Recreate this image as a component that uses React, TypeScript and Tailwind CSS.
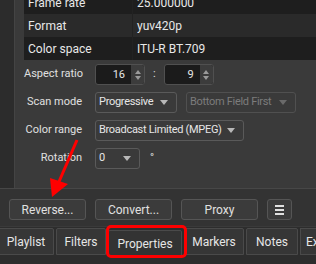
const font = { fontFamily: 'Roboto, "Noto Sans", sans-serif' }

function Combo({ text, w, disabled }: { text: string; w: string; disabled?: boolean }) {
  return (
    <div className={`${w} h-[21px] shrink-0 whitespace-nowrap flex items-center justify-between pl-[3px] pr-[8px] rounded-[3px] border ${disabled ? 'border-[#505050] text-[#7c7c7c]' : 'border-[#5a5a5a] text-[#e6e6e6]'} bg-[#3a3a3a]`}>
      <span className="tracking-[-0.3px]">{text}</span>
      <span className={`w-0 h-0 border-l-[4px] border-r-[4px] border-t-[5px] border-l-transparent border-r-transparent ${disabled ? 'border-t-[#6a6a6a]' : 'border-t-[#b8b8b8]'}`} />
    </div>
  )
}

function Spin({ value }: { value: string }) {
  return (
    <div className="w-[50px] h-[21px] flex rounded-[3px] border border-[#505050] bg-[#1b1b1b] overflow-hidden">
      <span className="flex-1 text-right pr-[6px] leading-[19px] text-[#e6e6e6]">{value}</span>
      <div className="w-[13px] bg-[#3c3c3c] flex flex-col items-center justify-center gap-[2px]">
        <span className="w-0 h-0 border-l-[3px] border-r-[3px] border-b-[4px] border-l-transparent border-r-transparent border-b-[#9a9a9a]" />
        <span className="w-0 h-0 border-l-[3px] border-r-[3px] border-t-[4px] border-l-transparent border-r-transparent border-t-[#9a9a9a]" />
      </div>
    </div>
  )
}

function Btn({ children, w }: { children: React.ReactNode; w: string }) {
  return (
    <div className={`${w} h-[21px] shrink-0 flex items-center justify-center rounded-[3px] border border-[#555] bg-[#3b3b3b] text-[#e0e0e0]`}>
      {children}
    </div>
  )
}

function Tab({ label, w, sel }: { label: string; w: string; sel?: boolean }) {
  return (
    <div className={`${w} h-[27px] shrink-0 whitespace-nowrap flex items-center justify-center border border-[#4a4a4a] rounded-t-[2px] ${sel ? 'bg-[#333333] mt-[2px]' : 'bg-[#363636]'} text-[#e6e6e6]`}>
      {label}
    </div>
  )
}

export default function App() {
  const rows = [
    { k: 'Frame rate', v: '25.000000', bg: 'bg-[#1e1e1e]' },
    { k: 'Format', v: 'yuv420p', bg: 'bg-[#2a2a2a]' },
    { k: 'Color space', v: 'ITU-R BT.709', bg: 'bg-[#1e1e1e]' },
  ]
  return (
    <div className="relative w-[316px] h-[264px] overflow-hidden bg-[#2d2d2d] text-[12px]" style={font}>
      <div className="flex h-[189px] border-b border-[#474747]">
        <div className="w-[15px] bg-[#2c2c2c] border-r border-[#444]" />
        <div className="flex-1 bg-[#3a3a3a] pl-[9px] overflow-hidden">
          <div className="text-[12px] text-[#e8e8e8] -mt-[9px]">
            {rows.map(r => (
              <div key={r.k} className={`flex h-[23px] items-center whitespace-nowrap ${r.bg}`}>
                <div className="w-[109px] h-full pl-[4px] border-r border-[#222] flex items-center">{r.k}</div>
                <div className="pl-[4px] flex items-center h-full">{r.v}</div>
              </div>
            ))}
          </div>
          <div className="grid grid-cols-[58px_1fr] gap-x-[13px] gap-y-[7px] mt-[4px] text-[11px] text-[#e0e0e0] items-center whitespace-nowrap">
            <div className="text-right">Aspect ratio</div>
            <div className="flex items-center gap-[8px]">
              <Spin value="16" />
              <span>:</span>
              <Spin value="9" />
            </div>
            <div className="text-right">Scan mode</div>
            <div className="flex items-center gap-[9px]">
              <Combo text="Progressive" w="w-[82px]" />
              <Combo text="Bottom Field First" w="w-[110px]" disabled />
            </div>
            <div className="text-right">Color range</div>
            <div className="flex">
              <Combo text="Broadcast Limited (MPEG)" w="w-[149px]" />
            </div>
            <div className="text-right">Rotation</div>
            <div className="flex items-center gap-[10px]">
              <Combo text="0" w="w-[45px]" />
              <span>°</span>
            </div>
          </div>
        </div>
      </div>
      <div className="bg-[#333333] h-[37px] flex items-start pt-[10px] pl-[9px] gap-[9px]">
        <Btn w="w-[77px]">Reverse...</Btn>
        <Btn w="w-[77px]">Convert...</Btn>
        <Btn w="w-[77px]">Proxy</Btn>
        <Btn w="w-[25px]">
          <div className="flex flex-col gap-[2px]">
            <span className="block w-[9px] h-[2px] bg-[#e0e0e0]" />
            <span className="block w-[9px] h-[2px] bg-[#e0e0e0]" />
            <span className="block w-[9px] h-[2px] bg-[#e0e0e0]" />
          </div>
        </Btn>
      </div>
      <div className="flex items-start gap-[2px] -ml-[2px] pt-[1px] border-t border-[#3a3a3a]">
        <Tab label="Playlist" w="w-[56px]" />
        <Tab label="Filters" w="w-[50px]" />
        <Tab label="Properties" w="w-[74px]" sel />
        <Tab label="Markers" w="w-[60px]" />
        <Tab label="Notes" w="w-[52px]" />
        <div className="w-[60px] h-[27px] shrink-0 flex items-center pl-[5px] border border-[#4a4a4a] bg-[#363636] text-[#e6e6e6]">Export</div>
      </div>
      <div className="absolute left-[106px] top-[225px] w-[81px] h-[33px] border-[3px] border-[#ff0000] rounded-[5px]" />
      <svg className="absolute left-0 top-0" width="316" height="264">
        <line x1="77" y1="140" x2="58" y2="184" stroke="#ff0000" strokeWidth="3" />
        <polygon points="52,197 50,178 68,184" fill="#ff0000" />
      </svg>
    </div>
  )
}
